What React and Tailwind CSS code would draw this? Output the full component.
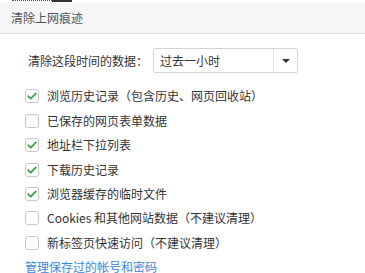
import { useState } from 'react'

const options = [
  { label: '浏览历史记录（包含历史、网页回收站）', checked: true },
  { label: '已保存的网页表单数据', checked: false },
  { label: '地址栏下拉列表', checked: true },
  { label: '下载历史记录', checked: true },
  { label: '浏览器缓存的临时文件', checked: true },
  { label: 'Cookies 和其他网站数据（不建议清理）', checked: false },
  { label: '新标签页快速访问（不建议清理）', checked: false }
]

function CheckBox({ checked, onClick }) {
  return (
    <button
      onClick={onClick}
      className="flex h-[14px] w-[14px] shrink-0 items-center justify-center rounded-[3px] border border-[#c9c9c9] bg-white"
    >
      {checked && (
        <svg width="10" height="8" viewBox="0 0 10 8" fill="none">
          <path d="M1.2 4.2 L3.8 6.6 L8.8 1.4" stroke="#3aa54a" strokeWidth="1.8" strokeLinecap="round" strokeLinejoin="round" />
        </svg>
      )}
    </button>
  )
}

export default function App() {
  const [items, setItems] = useState(options)

  const toggle = (i) => {
    setItems(items.map((it, j) => (j === i ? { ...it, checked: !it.checked } : it)))
  }

  return (
    <div
      className="relative h-[273px] w-[365px] overflow-hidden bg-white text-[12px] text-[#333]"
      style={{ fontFamily: '"Noto Sans CJK SC", "Microsoft YaHei", sans-serif' }}
    >
      {/* 上一行文字的残影 */}
      <div className="flex h-[3px] items-start pl-[12px]">
        <div className="h-[2px] w-[40px] border-t border-dotted border-[#555]" />
        <div className="h-[2px] w-[20px] bg-[#333]" />
      </div>

      {/* 标题栏 */}
      <div className="flex h-[31px] items-center border-b border-[#e2e2e2] bg-[#f6f6f6] pl-[11px] leading-none text-[#555]">
        清除上网痕迹
      </div>

      {/* 时间范围 */}
      <div className="mt-[14px] flex items-center pl-[28px]">
        <span className="w-[125px] leading-none">清除这段时间的数据：</span>
        <div className="flex h-[25px] w-[145px] items-stretch rounded-[2px] border border-[#d4d4d4] bg-white">
          <span className="flex flex-1 items-center pl-[6px] leading-none">过去一小时</span>
          <span className="flex w-[24px] items-center justify-center border-l border-[#e0e0e0]">
            <svg width="8" height="4" viewBox="0 0 8 4">
              <path d="M0 0 H8 L4 4 Z" fill="#333" />
            </svg>
          </span>
        </div>
      </div>

      {/* 选项 */}
      <div className="mt-[11px] pl-[25px]">
        {items.map((it, i) => (
          <div key={i} className="flex h-[24.45px] items-center gap-[8px]">
            <CheckBox checked={it.checked} onClick={() => toggle(i)} />
            <span className="leading-none">{it.label}</span>
          </div>
        ))}
        <div className="flex h-[24.45px] items-center">
          <a className="leading-none text-[#3d86d6]" href="#">管理保存过的帐号和密码</a>
        </div>
      </div>
    </div>
  )
}
